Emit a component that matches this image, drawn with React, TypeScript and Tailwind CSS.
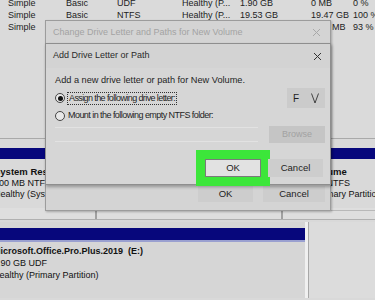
import React from "react";

const font = { fontFamily: '"Liberation Sans", Arial, sans-serif' };

function Row({ cells }: { cells: string[] }) {
  return (
    <div className="grid h-[12px] grid-cols-[58px_51px_65px_58px_71px_42px_1fr] items-center pl-[8px] text-[9px] leading-[12px] text-[#222]">
      {cells.map((c, i) => (
        <div key={i} className="whitespace-nowrap">
          {c}
        </div>
      ))}
    </div>
  );
}

function Radio({ checked }: { checked?: boolean }) {
  return (
    <span className="flex h-[10px] w-[10px] shrink-0 items-center justify-center rounded-full border border-[#444] bg-[#e8e8e8]">
      {checked ? <span className="h-[5px] w-[5px] rounded-full bg-[#111]" /> : null}
    </span>
  );
}

function CloseX({ className }: { className: string }) {
  return (
    <svg width="9" height="9" viewBox="0 0 9 9" className={className}>
      <path d="M1 1 L8 8 M8 1 L1 8" stroke="currentColor" strokeWidth="1" fill="none" />
    </svg>
  );
}

export default function App() {
  return (
    <div className="relative h-[300px] w-[375px] overflow-hidden bg-[#d9d9d9]" style={font}>
      {/* volume list */}
      <div className="h-[142px] border-b border-[#a9a9a9] bg-[#dadada]">
        <div className="-mt-[3px]">
          <Row cells={["Simple", "Basic", "UDF", "Healthy (P...", "1.90 GB", "0 MB", "0 %"]} />
          <Row cells={["Simple", "Basic", "NTFS", "Healthy (P...", "19.53 GB", "19.47 GB", "100 %"]} />
          <div className="grid h-[12px] grid-cols-[303px_42px_1fr] items-center pl-[8px] text-[9px] leading-[12px] text-[#222]">
            <div>Simple</div>
            <div className="pl-[21px]">MB</div>
            <div className="whitespace-nowrap">93 %</div>
          </div>
        </div>
      </div>

      {/* disk 0 */}
      <div className="mt-[8px] flex h-[61px]">
        <div className="w-[97px] shrink-0 border-r border-[#b5b5b5]">
          <div className="mt-[1px] h-[11px] bg-[#07077c]" />
          <div className="mt-[7px] w-[45px] overflow-hidden">
            <div className="-ml-[6px] whitespace-nowrap text-[9px] leading-[11.5px] text-[#111]">
              <div className="text-[9.5px] font-bold">System Reserved</div>
              <div>500 MB NTFS</div>
              <div>Healthy (System, Active, Primary Partition)</div>
            </div>
          </div>
        </div>
        <div className="w-[186px] shrink-0 border-r border-[#b5b5b5]">
          <div className="mt-[1px] h-[11px] bg-[#07077c]" />
        </div>
        <div className="min-w-0 flex-1">
          <div className="mt-[1px] h-[11px] bg-[#07077c]" />
          <div className="ml-[48px] mt-[7px] overflow-hidden">
            <div className="-ml-[40px] whitespace-nowrap text-[9px] leading-[11.5px] text-[#111]">
              <div className="text-[9.5px] font-bold">New Volume</div>
              <div className="-ml-[5px]">19.53 GB NTFS</div>
              <div className="-ml-[12px]">Healthy (Primary Partition)</div>
            </div>
          </div>
        </div>
      </div>
      <div className="flex h-[12px] border-b border-[#b0b0b0] bg-[#dedede]">
        <div className="w-[97px] shrink-0 border-r-2 border-[#a0a0a0]" />
        <div className="w-[186px] shrink-0 border-r-2 border-[#a0a0a0]" />
        <div className="mt-[2px] flex-1 border-t border-[#b8b8b8]" />
      </div>

      {/* disk 1 */}
      <div className="mt-[2px] flex h-[76px]">
        <div className="w-[308px] shrink-0 border-r-[3px] border-[#f0f0f0] bg-[#d6d6d6]">
          <div className="mt-[6px] h-[14px] border-b-2 border-[#9aa0d0] bg-[#07077c]" />
          <div className="-ml-[7px] mt-[3px] whitespace-nowrap text-[9px] leading-[12px] text-[#111]">
            <div className="font-bold">Microsoft.Office.Pro.Plus.2019&nbsp;&nbsp;(E:)</div>
            <div>1.90 GB UDF</div>
            <div>Healthy (Primary Partition)</div>
          </div>
        </div>
        <div className="flex-1 border-l border-[#a8a8a8] bg-[#dcdcdc]" />
      </div>

      {/* outer dialog */}
      <div className="absolute left-[45px] top-[20px] flex h-[191px] w-[286px] flex-col border border-[#9c9c9c] bg-[#d4d4d4] shadow-[1px_1px_2px_rgba(0,0,0,0.25)]">
        <div className="flex h-[23px] items-center justify-between pl-[7px] pr-[9px] text-[9px] text-[#a3a3a3]">
          <span>Change Drive Letter and Paths for New Volume</span>
          <CloseX className="text-[#a8a8a8]" />
        </div>
        <div className="flex-1" />
        <div className="flex justify-end gap-[10px] pb-[8px] pr-[5px] text-[9.5px] text-[#222]">
          <button className="h-[16px] w-[55px] bg-[#cdcdcd]">OK</button>
          <button className="h-[16px] w-[62px] bg-[#cdcdcd]">Cancel</button>
        </div>
      </div>

      {/* inner dialog */}
      <div className="absolute left-[45px] top-[43px] flex h-[142px] w-[286px] flex-col border border-[#8e8e8e] bg-[#d6d6d6] shadow-[1px_2px_3px_rgba(0,0,0,0.3)]">
        <div className="flex h-[24px] items-center justify-between bg-[#d3d3d3] pl-[7px] pr-[8px] text-[9px] text-[#2a2a2a]">
          <span>Add Drive Letter or Path</span>
          <CloseX className="text-[#333]" />
        </div>
        <div className="flex flex-1 flex-col pl-[9px] pr-[5px] text-[9px] text-[#1e1e1e]">
          <div className="mt-[6px] h-[12px] text-[9.2px] leading-[12px]">Add a new drive letter or path for New Volume.</div>
          <div className="mt-[2px] flex h-[20px] items-center">
            <Radio checked />
            <span className="ml-[2px] border border-dotted border-[#333] px-[1px] leading-[11px] tracking-[-0.6px]">
              Assign the following drive letter:
            </span>
            <div className="ml-auto flex h-[20px] w-[38px] items-center justify-between bg-[#cbcbcb] pl-[6px] pr-[6px]">
              <span className="text-[10px]">F</span>
              <svg width="8" height="11" viewBox="0 0 8 11">
                <path d="M0.5 0.5 L4 10 L7.5 0.5" stroke="#333" strokeWidth="0.9" fill="none" />
              </svg>
            </div>
          </div>
          <div className="flex h-[16px] items-center">
            <Radio />
            <span className="ml-[3px] tracking-[-0.55px]">Mount in the following empty NTFS folder:</span>
          </div>
          <div className="mt-[2px] flex h-[17px] items-center">
            <div className="h-[15px] w-[203px] border-y border-[#e2e2e2]" />
            <div className="ml-auto flex h-[17px] w-[56px] items-center justify-center bg-[#c5c5c5] text-[#a2a2a2]">
              Browse
            </div>
          </div>
          <div className="mt-[16px] flex justify-end gap-[7px] pr-[2px] text-[9.5px]">
            <button className="h-[18px] w-[56px] border border-[#7a7a7a] bg-[#e2e2e2] shadow-[0_0_0_9px_#3ce63a]">
              OK
            </button>
            <button className="h-[18px] w-[55px] bg-[#cdcdcd]">Cancel</button>
          </div>
        </div>
      </div>
    </div>
  );
}
